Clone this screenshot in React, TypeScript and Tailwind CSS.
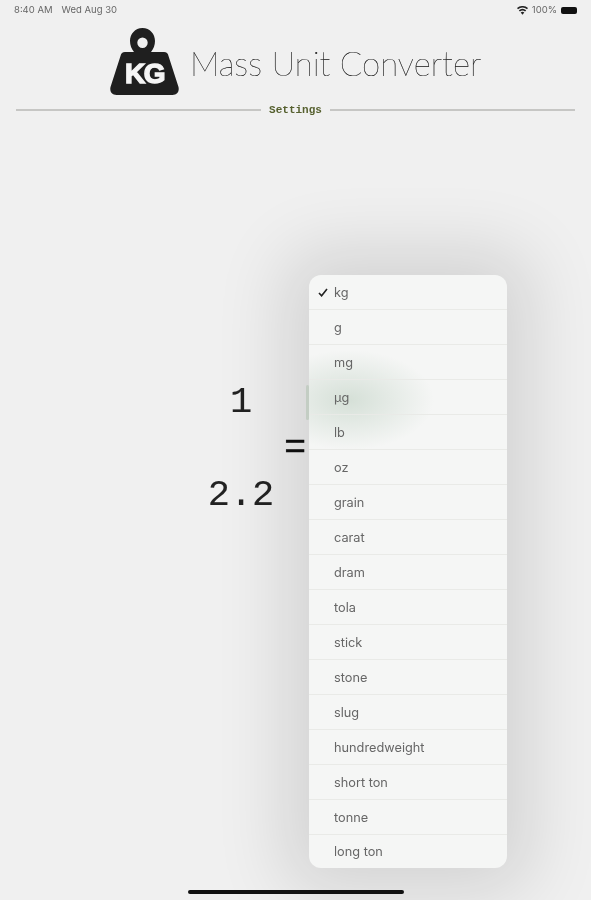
const units = ["kg","g","mg","µg","lb","oz","grain","carat","dram","tola","stick","stone","slug","hundredweight","short ton","tonne","long ton"];

function Wifi() {
  return (
    <svg width="11" height="9" viewBox="0 0 22 17" fill="#222">
      <path d="M11 17 7.4 12.6a5.6 5.6 0 0 1 7.2 0L11 17Z" />
      <path d="M5.8 10.7 3.6 8a11.4 11.4 0 0 1 14.8 0l-2.2 2.7a8 8 0 0 0-10.4 0Z" />
      <path d="M2 6 0 3.5a17 17 0 0 1 22 0L20 6A13.8 13.8 0 0 0 2 6Z" />
    </svg>
  );
}

function Weight() {
  return (
    <svg width="69" height="69" viewBox="0 0 69 69">
      <path fillRule="evenodd" fill="#1f1f1f" d="M32.500 1C25 1 20 7 20 14c0 4 1.500 8 4 11h-9c-2.500 0-4 1.500-4.500 4L.5 60c-1 5 1.500 8 6 8h56c4.500 0 7-3 6-8L58.500 29c-.5-2.500-2-4-4.500-4H41c2.500-3 4-7 4-11C45 7 40 1 32.500 1Zm0 9.500a5.200 5.200 0 1 1 0 10.400 5.200 5.200 0 0 1 0-10.400Z" />
      <text x="34.500" y="56" textAnchor="middle" fill="#f5f5f5" fontFamily="Liberation Sans, sans-serif" fontWeight="700" fontSize="28" stroke="#f5f5f5" strokeWidth="1.400" letterSpacing="-1.500">KG</text>
    </svg>
  );
}

export default function App() {
  return (
    <div className="relative flex h-[900px] w-[591px] flex-col overflow-hidden bg-[#f0f0f0] blur-[0.6px]">
      <div className="flex h-[19px] items-center justify-between pl-[14px] pr-[14px] pt-[1px] font-['Inter',sans-serif] text-[9.5px] text-[#666]">
        <div className="flex gap-[9px]">
          <span>8:40 AM</span>
          <span>Wed Aug 30</span>
        </div>
        <div className="flex items-center gap-[4px]">
          <Wifi />
          <span>100%</span>
          <span className="h-[7px] w-[16px] rounded-[2px] bg-[#111]" />
        </div>
      </div>
      <div className="ml-[110px] mt-[8px] flex h-[69px] items-center gap-[11px]">
        <Weight />
        <span className="pt-[3px] font-['Lato',sans-serif] text-[33px] font-thin leading-none text-[#111] [-webkit-text-stroke:0.2px_#111]">Mass Unit Converter</span>
      </div>
      <div className="mt-[8px] flex h-[12px] items-center px-[16px]">
        <div className="h-[2px] flex-1 bg-[#c6c6c4]" />
        <span className="px-[8px] font-['Liberation_Mono',monospace] text-[11px] font-bold leading-none text-[#56602f]">Settings</span>
        <div className="h-[2px] flex-1 bg-[#c6c6c4]" />
      </div>
      <div className="ml-[175px] mt-[266px] flex w-[132px] font-['Liberation_Mono',monospace] text-[#222] [-webkit-text-stroke:0.1px_#222]">
        <div className="flex w-[132px] flex-col items-center gap-[52px] text-[37px] leading-[41px]">
          <span>1</span>
          <span>2.2</span>
        </div>
      </div>
      <span className="absolute left-[284px] top-[428px] font-['Liberation_Mono',monospace] text-[37px] leading-[41px] text-[#111] [-webkit-text-stroke:0.3px_#111]">=</span>
      <div className="absolute left-[309px] top-[275px] w-[198px] overflow-hidden rounded-[12px] bg-[#f5f6f5] font-['Inter',sans-serif] text-[12.75px] text-[#666] shadow-[0_0_70px_25px_rgba(0,0,0,0.12)]">
        <div className="absolute left-[-45px] top-[75px] h-[100px] w-[170px] bg-[radial-gradient(closest-side,rgba(165,190,170,0.4),rgba(165,190,170,0))]" />
        {units.map((u, i) => (
          <div key={u} className={i < units.length - 1 ? "relative flex h-[35px] items-center border-b-[1.5px] border-[#e9eae7] pl-[25px] pt-[1px]" : "relative flex h-[33px] items-center pl-[25px] pt-[1px]"}>
            {i === 0 && (
              <svg className="absolute left-[9px] top-[13px]" width="10" height="9" viewBox="0 0 10 9" fill="none" stroke="#222" strokeWidth="1.600">
                <path d="M1 5 3.600 7.800 9 1" />
              </svg>
            )}
            {u}
          </div>
        ))}
      </div>
      <div className="absolute left-[306px] top-[385px] h-[35px] w-[3px] rounded-full bg-[#c3cdc3]" />
      <div className="absolute left-[188px] top-[890px] h-[4px] w-[216px] rounded-full bg-[#111]" />
    </div>
  );
}
